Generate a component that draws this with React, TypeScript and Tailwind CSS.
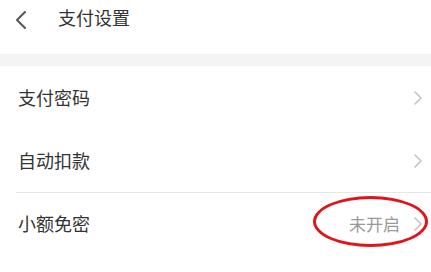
import React from 'react';

const font = { fontFamily: '"Noto Sans CJK SC", "Noto Sans", sans-serif' };

const Chevron = () => (
  <svg width="8" height="14" viewBox="0 0 8 14" className="shrink-0">
    <path d="M1 1l6 6-6 6" fill="none" stroke="#c4c4c4" strokeWidth="1.6" strokeLinecap="round" strokeLinejoin="round" />
  </svg>
);

const Row = ({ label, value, divider }: { label: string; value?: string; divider?: boolean }) => (
  <div className="relative h-[63px] flex items-center pl-[18px] pr-[9px]">
    {divider && <div className="absolute top-0 left-[16px] right-0 h-px bg-[#e6e6e6]" />}
    <span className="flex-1 text-[18px] text-[#333]">{label}</span>
    {value && <span className="text-[17px] text-[#999] mr-[14px]">{value}</span>}
    <Chevron />
  </div>
);

export default function App() {
  return (
    <div className="w-[431px] h-[272px] bg-white overflow-hidden" style={font}>
      {/* header */}
      <div className="h-[54px] flex items-start pt-[5px]">
        <svg width="14" height="20" viewBox="0 0 14 20" className="ml-[14px] mt-[5px]">
          <path d="M11 2L3 10l8 8" fill="none" stroke="#555" strokeWidth="2" strokeLinecap="round" strokeLinejoin="round" />
        </svg>
        <span className="ml-[30px] text-[18px] leading-[24px] text-[#333]">支付设置</span>
      </div>
      <div className="h-[12px] bg-[#f4f4f4]" />

      <Row label="支付密码" />
      <Row label="自动扣款" />
      <div className="relative">
        <Row label="小额免密" value="未开启" divider />
        {/* red annotation */}
        <div className="absolute left-[313px] top-[4px] w-[115px] h-[51px] rounded-[50%] border-[3px] border-[#e0141b]" />
      </div>
    </div>
  );
}
